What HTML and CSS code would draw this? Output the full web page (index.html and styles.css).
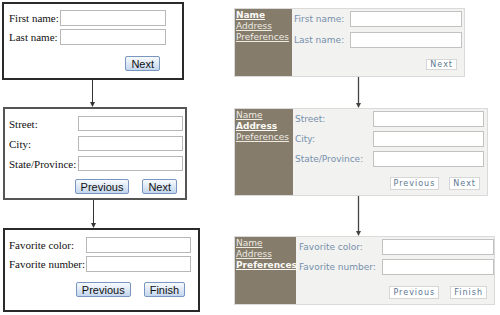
FILE: index.html
```html
<!DOCTYPE html>
<html lang="en">
  <head>
    <meta charset="UTF-8" />
    <title>Wizard forms</title>
    <link rel="stylesheet" href="styles.css">
  </head>
  <body>
    <div class="page">
      <!-- plain wizard -->
      <div class="column classic">
        <form class="box box-name">
          <div class="fields">
            <label>First name:</label><input type="text" />
            <label>Last name:</label><input type="text" />
          </div>
          <div class="buttons"><button type="button">Next</button></div>
        </form>
        <svg class="arrow arrow-a" width="7" height="27" viewBox="0 0 7 27">
          <line x1="3.5" y1="0" x2="3.5" y2="23" stroke="#333" />
          <polygon points="1,22 6,22 3.5,27" fill="#333" />
        </svg>
        <form class="box box-address">
          <div class="fields">
            <label>Street:</label><input type="text" />
            <label>City:</label><input type="text" />
            <label>State/Province:</label><input type="text" />
          </div>
          <div class="buttons">
            <button type="button">Previous</button>
            <button type="button">Next</button>
          </div>
        </form>
        <svg class="arrow arrow-b" width="7" height="28" viewBox="0 0 7 28">
          <line x1="3.5" y1="0" x2="3.5" y2="24" stroke="#333" />
          <polygon points="1,23 6,23 3.5,28" fill="#333" />
        </svg>
        <form class="box box-prefs">
          <div class="fields">
            <label>Favorite color:</label><input type="text" />
            <label>Favorite number:</label><input type="text" />
          </div>
          <div class="buttons">
            <button type="button">Previous</button>
            <button type="button">Finish</button>
          </div>
        </form>
      </div>

      <!-- styled wizard -->
      <div class="column styled">
        <form class="panel panel-name">
          <nav class="steps">
            <a href="#" class="current">Name</a>
            <a href="#">Address</a>
            <a href="#">Preferences</a>
          </nav>
          <div class="content">
            <div class="fields">
              <label>First name:</label><input type="text" />
              <label>Last name:</label><input type="text" />
            </div>
            <div class="buttons"><button type="button">Next</button></div>
          </div>
        </form>
        <svg class="arrow arrow-c" width="7" height="31" viewBox="0 0 7 31">
          <line x1="3.5" y1="0" x2="3.5" y2="27" stroke="#444" stroke-width="1.3" />
          <polygon points="1,26 6,26 3.5,31" fill="#444" />
        </svg>
        <form class="panel panel-address">
          <nav class="steps">
            <a href="#">Name</a>
            <a href="#" class="current">Address</a>
            <a href="#">Preferences</a>
          </nav>
          <div class="content">
            <div class="fields">
              <label>Street:</label><input type="text" />
              <label>City:</label><input type="text" />
              <label>State/Province:</label><input type="text" />
            </div>
            <div class="buttons">
              <button type="button">Previous</button>
              <button type="button">Next</button>
            </div>
          </div>
        </form>
        <svg class="arrow arrow-c" width="7" height="40" viewBox="0 0 7 40">
          <line x1="3.5" y1="0" x2="3.5" y2="36" stroke="#444" stroke-width="1.3" />
          <polygon points="1,35 6,35 3.5,40" fill="#444" />
        </svg>
        <form class="panel panel-prefs">
          <nav class="steps">
            <a href="#">Name</a>
            <a href="#">Address</a>
            <a href="#" class="current">Preferences</a>
          </nav>
          <div class="content">
            <div class="fields">
              <label>Favorite color:</label><input type="text" />
              <label>Favorite number:</label><input type="text" />
            </div>
            <div class="buttons">
              <button type="button">Previous</button>
              <button type="button">Finish</button>
            </div>
          </div>
        </form>
      </div>
    </div>
  </body>
</html>
```

FILE: styles.css
```css
body {
  margin: 0;
  background: #fff;
}
.page {
  display: grid;
  grid-template-columns: 234px 266px;
}
.column {
  display: flex;
  flex-direction: column;
  align-items: flex-start;
}
.arrow {
  display: block;
}
.fields {
  display: grid;
  align-items: center;
}
.fields label {
  white-space: nowrap;
}
input {
  margin: 0;
  padding: 0;
  box-sizing: border-box;
  background: #fff;
}
.buttons {
  display: flex;
  justify-content: flex-end;
}
button {
  margin: 0;
  cursor: pointer;
}

/* plain wizard */
.classic {
  padding-top: 2px;
  font: 11px "Liberation Serif", serif;
  color: #111;
}
.box {
  margin: 0;
  border: 2px solid #2a2a2a;
  box-sizing: border-box;
}
.classic input {
  height: 16px;
  border: 1px solid #b8b8b8;
}
.classic button {
  height: 15px;
  padding: 0 5px;
  font: 11px "Liberation Sans", sans-serif;
  color: #111;
  border: 1px solid #7896c0;
  border-radius: 2px;
  background: linear-gradient(#f8fbfe, #c4d6ed);
}
.classic .buttons {
  gap: 13px;
  padding-right: 6px;
}
.box-name {
  margin-left: 2px;
  width: 182px;
  padding: 6px 16px 7px 5px;
}
.box-name .fields {
  grid-template-columns: 1fr 106px;
  row-gap: 3px;
}
.box-name .buttons {
  margin-top: 11px;
}
.arrow-a {
  margin-left: 89px;
}
.box-address {
  margin-left: 3px;
  width: 184px;
  padding: 7px 2px 4px 4px;
  border-color: #555;
}
.box-address .fields {
  grid-template-columns: 1fr 105px;
  row-gap: 5px;
}
.box-address input {
  height: 15px;
}
.box-address .buttons {
  margin-top: 8px;
}
.arrow-b {
  margin-left: 90px;
}
.box-prefs {
  margin-left: 3px;
  width: 197px;
  padding: 7px 7px 13px 4px;
}
.box-prefs .fields {
  grid-template-columns: 1fr 105px;
  row-gap: 3px;
}
.box-prefs .buttons {
  margin-top: 10px;
}

/* styled wizard */
.styled {
  padding-top: 8px;
  font: 9px "DejaVu Sans", Verdana, sans-serif;
}
.panel {
  display: flex;
  margin: 0;
  border: 1px solid #dadada;
  background: #f2f2f1;
  box-sizing: border-box;
}
.steps {
  display: flex;
  flex-direction: column;
  padding: 1px 0 0 1px;
  background: #857c6c;
  line-height: 11px;
}
.steps a {
  color: #eeebe3;
  text-decoration: underline;
}
.steps a.current {
  font-weight: bold;
  color: #fbfaf6;
}
.content {
  flex: 1;
}
.styled label {
  color: #7690ab;
}
.styled input {
  height: 16px;
  border: 1px solid #c2c2c2;
}
.styled button {
  height: 13px;
  padding: 0 3px;
  font: 8px "DejaVu Sans", Verdana, sans-serif;
  letter-spacing: 1px;
  color: #5c7691;
  background: #fff;
  border: 1px solid #d6d6d6;
}
.styled .buttons {
  gap: 10px;
}
.arrow-c {
  margin-left: 121px;
}
.panel-name {
  width: 231px;
}
.panel-name .steps {
  width: 56px;
}
.panel-name .content {
  padding: 2px 2px 6px 2px;
}
.panel-name .fields {
  grid-template-columns: 1fr 112px;
  row-gap: 5px;
}
.panel-name .buttons {
  margin-top: 11px;
  padding-right: 5px;
}
.panel-name button {
  height: 11px;
}
.panel-address {
  width: 254px;
}
.panel-address .steps {
  width: 57px;
}
.panel-address .content {
  padding: 2px 3px 5px 2px;
}
.panel-address .fields {
  grid-template-columns: 1fr 111px;
  row-gap: 4px;
}
.panel-address .buttons {
  margin-top: 10px;
  padding-right: 4px;
}
.panel-prefs {
  width: 261px;
}
.panel-prefs .steps {
  width: 60px;
}
.panel-prefs .content {
  padding: 2px 0 5px 3px;
}
.panel-prefs .fields {
  grid-template-columns: 1fr 112px;
  row-gap: 4px;
}
.panel-prefs .buttons {
  margin-top: 11px;
  padding-right: 7px;
  gap: 11px;
}
```
